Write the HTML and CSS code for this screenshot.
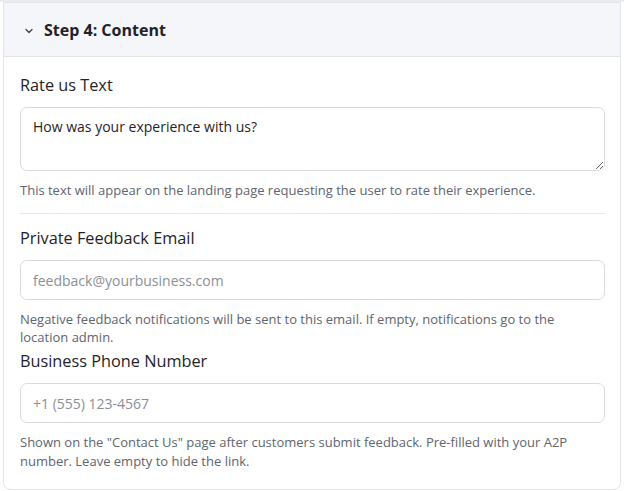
FILE: index.html
```html
<!DOCTYPE html>
<html>
<head>
<meta charset="utf-8">
<link rel="stylesheet" href="styles.css">
</head>
<body>
<div class="page">
  <div class="topstrip"></div>
  <section class="card">
    <header class="card-head">
      <svg class="chev" width="10" height="10" viewBox="0 0 10 10"><path d="M2 3.5 L5 6.5 L8 3.5" fill="none" stroke="#374151" stroke-width="1.3" stroke-linecap="round" stroke-linejoin="round"/></svg>
      <h2 class="title">Step 4: Content</h2>
    </header>
    <div class="card-body">
      <div class="field">
        <label class="label">Rate us Text</label>
        <textarea class="textarea">How was your experience with us?</textarea>
        <p class="help">This text will appear on the landing page requesting the user to rate their experience.</p>
      </div>
      <hr class="divider">
      <div class="field">
        <label class="label">Private Feedback Email</label>
        <input class="input" type="text" placeholder="feedback@yourbusiness.com">
        <p class="help">Negative feedback notifications will be sent to this email. If empty, notifications go to the location admin.</p>
      </div>
      <div class="field field-tight">
        <label class="label">Business Phone Number</label>
        <input class="input" type="text" placeholder="+1 (555) 123-4567">
        <p class="help help-last">Shown on the "Contact Us" page after customers submit feedback. Pre-filled with your A2P number. Leave empty to hide the link.</p>
      </div>
    </div>
  </section>
</div>
</body>
</html>
```

FILE: styles.css
```css
* { box-sizing: border-box; }
html, body { margin: 0; padding: 0; background: #ffffff; }
body { font-family: "Open Sans", "Noto Sans", sans-serif; color: #1f2937; }
.page { padding: 0 3px 2px 3px; }
.topstrip { height: 2px; background: #e9ebef; margin: 0 -3px; }
.card {
  border: 1px solid #e3e5e9;
  border-radius: 0 0 8px 8px;
  background: #fff;
}
.card-head {
  display: flex;
  align-items: center;
  height: 54px;
  padding: 1px 0 0 20px;
  background: #f5f6fa;
  border-bottom: 1px solid #e3e5e9;
}
.chev { margin-right: 10px; margin-top: 1px; }
.title {
  margin: 0;
  font-size: 16px;
  font-weight: 700;
  color: #1f2328;
}
.card-body { padding: 16px 15px 18px 16px; }
.field { display: flex; flex-direction: column; }
.label {
  font-size: 16.3px;
  line-height: 24px;
  color: #1f2328;
  margin-bottom: 10px;
}
.textarea, .input {
  width: 100%;
  border: 1px solid #d9dbdf;
  border-radius: 7px;
  font-family: "Open Sans", "Noto Sans", sans-serif;
  font-size: 14px;
  color: #1f2328;
  padding: 0 12px;
  background: #fff;
  outline: none;
}
.textarea {
  height: 64px;
  padding-top: 9px;
  line-height: 20px;
  resize: vertical;
}
.input { height: 40px; }
.input::placeholder { color: #8a8f98; }
.help {
  margin: 10px 0 0 0;
  font-size: 13px;
  line-height: 18px;
  color: #60656e;
}
.divider {
  border: 0;
  border-top: 1px solid #e5e7eb;
  margin: 14px 0 12px 0;
}
.field-tight { margin-top: 3px; }
.help-last { line-height: 19px; }
```
